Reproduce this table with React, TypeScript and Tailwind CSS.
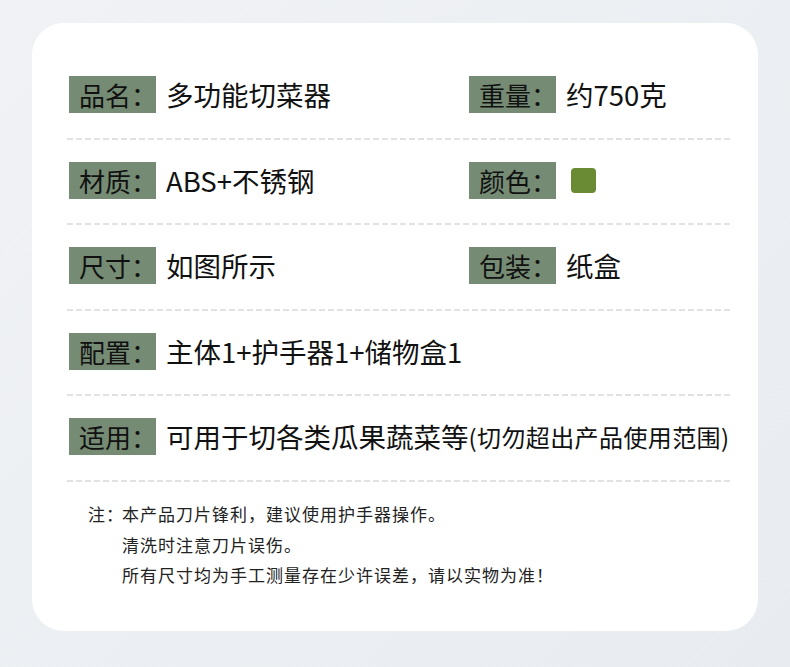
import React from "react";

const font = "font-['Noto_Sans_CJK_SC','Noto_Sans',sans-serif]";

function Label({ children }: { children: React.ReactNode }) {
  return (
    <div className="w-[87px] h-[37px] bg-[#758b74] pl-[10px] flex items-center text-[26px] leading-none text-[#111] shrink-0 whitespace-nowrap overflow-visible">
      {children}
    </div>
  );
}

function Item({ label, children }: { label: string; children: React.ReactNode }) {
  return (
    <div className="flex items-center">
      <Label>{label}</Label>
      <div className="ml-[10px] text-[27.5px] leading-none text-[#111] flex items-center whitespace-nowrap">{children}</div>
    </div>
  );
}

function Dash() {
  return (
    <div className="-ml-[2px] w-[666px] h-[2px] bg-[repeating-linear-gradient(90deg,#e2e2e2_0px,#e2e2e2_6px,transparent_6px,transparent_9px)]" />
  );
}

function Row({ children, tall }: { children: React.ReactNode; tall?: boolean }) {
  return (
    <div>
      <div className={tall ? "grid grid-cols-[400px_1fr] pb-[25px]" : "grid grid-cols-[400px_1fr] pb-[24px]"}>{children}</div>
      <Dash />
      <div className="h-[22px]" />
    </div>
  );
}

export default function App() {
  return (
    <div className={`w-[790px] h-[667px] bg-[linear-gradient(135deg,#f0f2f5,#e8ecf0)] pt-[23px] pl-[32px] ${font}`}>
      <div className="w-[726px] h-[608px] bg-white rounded-[32px] pt-[53px] pl-[37px]">
        <Row tall>
          <Item label="品名：">多功能切菜器</Item>
          <Item label="重量：">约750克</Item>
        </Row>
        <Row>
          <Item label="材质：">ABS+不锈钢</Item>
          <Item label="颜色：">
            <span className="inline-block w-[25px] h-[25px] rounded-[4px] bg-[#6a8a33] ml-[5px]" />
          </Item>
        </Row>
        <Row tall>
          <Item label="尺寸：">如图所示</Item>
          <Item label="包装：">纸盒</Item>
        </Row>
        <Row>
          <Item label="配置：">主体1+护手器1+储物盒1</Item>
        </Row>
        <div>
          <div className="pb-[25px]">
            <Item label="适用：">
              可用于切各类瓜果蔬菜等<span className="text-[24px] tracking-[0.4px]">(切勿超出产品使用范围)</span>
            </Item>
          </div>
          <Dash />
        </div>
        <div className="mt-[17px] ml-[21px] text-[17px] leading-[30.5px] tracking-[1px] text-[#222]">
          <div className="flex">
            <span className="w-[34px] -ml-[2px]">注：</span>
            <span>本产品刀片锋利，建议使用护手器操作。</span>
          </div>
          <div className="pl-[32px]">清洗时注意刀片误伤。</div>
          <div className="pl-[32px]">所有尺寸均为手工测量存在少许误差，请以实物为准！</div>
        </div>
      </div>
    </div>
  );
}
